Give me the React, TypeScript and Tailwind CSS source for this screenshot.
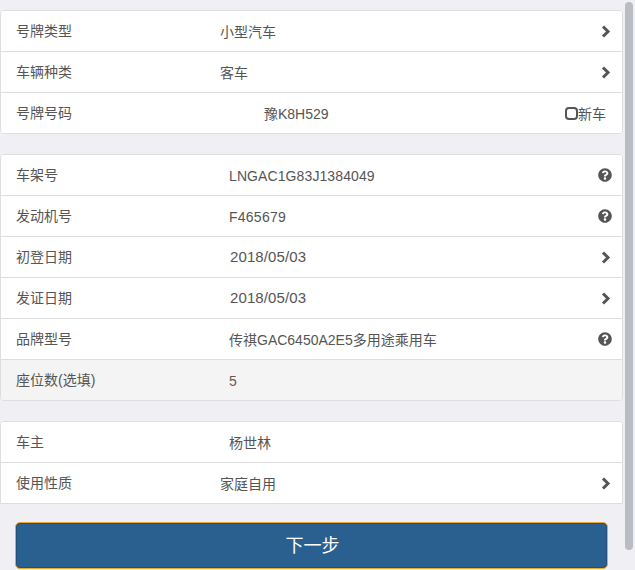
import { FaQuestionCircle } from "react-icons/fa";

type RowProps = {
  label: string;
  value: string;
  valueClass: string;
  icon?: "chevron" | "help";
  shaded?: boolean;
};

function Chevron() {
  return (
    <svg width="10" height="13" viewBox="0 0 10 13" className="ml-[3px]" aria-hidden="true">
      <path d="M2 1.5 L7 6.5 L2 11.5" fill="none" stroke="#555" strokeWidth="3" />
    </svg>
  );
}

function Row({ label, value, valueClass, icon, shaded }: RowProps) {
  return (
    <div className={`flex h-[41px] items-center border-b border-[#dedee0] last:h-[40px] last:border-b-0 ${shaded ? "bg-[#f4f4f4]" : "bg-white"}`}>
      <span className="w-[199px] shrink-0 pl-[15px]">{label}</span>
      <span className={valueClass}>{value}</span>
      <span className="ml-auto flex w-[24px] justify-start">
        {icon === "chevron" && <Chevron />}
        {icon === "help" && <FaQuestionCircle className="text-[14px] text-[#555]" />}
      </span>
    </div>
  );
}

function Panel({ children, square }: { children: React.ReactNode; square?: boolean }) {
  return (
    <div className={`w-[623px] overflow-hidden border border-[#dedee0] bg-white ${square ? "rounded-t-[4px]" : "rounded-[4px]"}`}>
      {children}
    </div>
  );
}

export default function App() {
  return (
    <div
      className="relative h-[570px] w-[635px] overflow-hidden bg-[#efeff4] pt-[10px] text-[14px] text-[#555]"
      style={{ fontFamily: '"Liberation Sans", "Noto Sans CJK SC", sans-serif' }}
    >
      <div className="flex flex-col gap-[20px]">
        <Panel>
          <Row label="号牌类型" value="小型汽车" valueClass="ml-[20px] pt-[2px]" icon="chevron" />
          <Row label="车辆种类" value="客车" valueClass="ml-[20px] pt-[2px]" icon="chevron" />
          <div className="flex h-[40px] items-center bg-white">
            <span className="w-[199px] shrink-0 pl-[15px]">号牌号码</span>
            <span className="ml-[64px] pt-[2px]">豫K8H529</span>
            <span className="ml-auto mr-[16px] flex items-center pt-[2px]">
              <span className="mb-[2px] h-[13px] w-[13px] rounded-[4px] border-2 border-[#555] bg-white" />
              新车
            </span>
          </div>
        </Panel>
        <Panel>
          <Row label="车架号" value="LNGAC1G83J1384049" valueClass="ml-[29px] pt-[2px] tracking-[0.1px]" icon="help" />
          <Row label="发动机号" value="F465679" valueClass="ml-[29px] pt-[2px] tracking-[0.25px]" icon="help" />
          <Row label="初登日期" value="2018/05/03" valueClass="ml-[30px] text-[15px] tracking-[0.1px]" icon="chevron" />
          <Row label="发证日期" value="2018/05/03" valueClass="ml-[30px] text-[15px] tracking-[0.1px]" icon="chevron" />
          <Row label="品牌型号" value="传祺GAC6450A2E5多用途乘用车" valueClass="ml-[29px] pt-[2px]" icon="help" />
          <Row label="座位数(选填)" value="5" valueClass="ml-[29px] pt-[2px] text-[#6b5a50]" shaded />
        </Panel>
        <Panel square>
          <Row label="车主" value="杨世林" valueClass="ml-[29px] pt-[2px]" />
          <Row label="使用性质" value="家庭自用" valueClass="ml-[20px] pt-[2px]" icon="chevron" />
        </Panel>
      </div>
      <button className="mx-[15px] mt-[18px] flex h-[47px] w-[593px] items-center justify-center rounded-[5px] border border-[#e8a93c] bg-[#2a6090] pl-[2px] pt-[2px] text-[18px] text-white shadow-[inset_0_0_0_1px_#234f78]">
        下一步
      </button>
      <div className="absolute right-[2px] top-[2px] h-[548px] w-[8px] rounded-[4px] bg-[#babcc3]" />
    </div>
  );
}
